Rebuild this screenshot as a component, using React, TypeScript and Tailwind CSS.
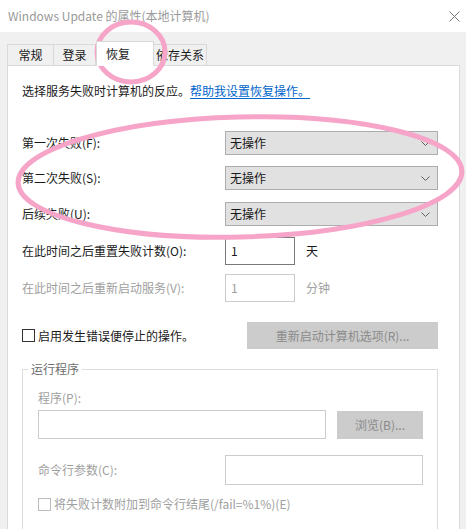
import React from 'react';

const font = { fontFamily: '"Noto Sans CJK SC", "Noto Sans", sans-serif' };

const Chevron = () => (
  <svg width="9" height="5" viewBox="0 0 9 5" className="shrink-0">
    <path d="M0.5 0.5 L4.5 4.5 L8.5 0.5" fill="none" stroke="#606060" strokeWidth="1" />
  </svg>
);

const Dropdown = ({ label }: { label: string }) => (
  <div className="flex items-center h-[24px]">
    <div className="w-[203px] text-[#1a1a1a]">{label}</div>
    <div className="w-[213px] h-[24px] bg-[#e1e1e1] border border-[#adadad] flex items-center justify-between pl-[4px] pr-[7px]">
      <span className="text-[#1a1a1a]">无操作</span>
      <Chevron />
    </div>
  </div>
);

export default function App() {
  const tabs = [
    { name: '常规', w: 'w-[47px]' },
    { name: '登录', w: 'w-[43px]' },
    { name: '恢复', w: 'w-[58px]', active: true },
    { name: '依存关系', w: 'w-[54px]' },
  ];

  return (
    <div className="relative w-[466px] h-[529px] overflow-hidden bg-[#f0f0f0] text-[12px] leading-none" style={font}>
      {/* Title bar */}
      <div className="h-[32px] bg-white flex items-center justify-between pl-[8px] pr-[6px]">
        <span className="text-[12px] text-[#9a9a9a]">Windows Update 的属性(本地计算机)</span>
        <svg width="11" height="11" viewBox="0 0 11 11">
          <path d="M0.5 0.5 L10.5 10.5 M10.5 0.5 L0.5 10.5" stroke="#777" strokeWidth="1" />
        </svg>
      </div>

      {/* Tabs */}
      <div className="h-[33px] flex items-end pl-[7px]">
        {tabs.map((t) =>
          t.active ? (
            <div
              key={t.name}
              className={`${t.w} h-[25px] -mb-px relative z-10 bg-white border border-[#d9d9d9] border-b-0 flex items-center pl-[9px] text-[#1a1a1a]`}
            >
              {t.name}
            </div>
          ) : (
            <div
              key={t.name}
              className={`${t.w} h-[21px] bg-[#f0f0f0] border border-[#d9d9d9] border-b-0 -ml-px first:ml-0 flex items-center justify-center text-[#1a1a1a]`}
            >
              {t.name}
            </div>
          )
        )}
      </div>

      {/* Panel */}
      <div className="ml-[7px] w-[453px] h-[470px] bg-white border border-[#d9d9d9] pl-[14px] flex flex-col">
        <div className="mt-[17px] h-[20px] flex items-center">
          <span className="text-[#1a1a1a]">选择服务失败时计算机的反应。</span>
          <span className="text-[#0066cc] underline underline-offset-2">帮助我设置恢复操作。</span>
        </div>

        <div className="mt-[32px]">
          <Dropdown label="第一次失败(F):" />
        </div>
        <div className="mt-[11px]">
          <Dropdown label="第二次失败(S):" />
        </div>
        <div className="mt-[12px]">
          <Dropdown label="后续失败(U):" />
        </div>

        <div className="mt-[11px] h-[28px] flex items-center">
          <div className="w-[203px] text-[#1a1a1a]">在此时间之后重置失败计数(O):</div>
          <div className="w-[70px] h-[28px] border border-[#7a7a7a] flex items-center pl-[5px] text-[#1a1a1a]">1</div>
          <span className="ml-[11px] text-[#1a1a1a]">天</span>
        </div>
        <div className="mt-[9px] h-[28px] flex items-center">
          <div className="w-[203px] text-[#a0a0a0]">在此时间之后重新启动服务(V):</div>
          <div className="w-[70px] h-[28px] border border-[#cccccc] flex items-center pl-[5px] text-[#a0a0a0]">1</div>
          <span className="ml-[11px] text-[#a0a0a0]">分钟</span>
        </div>

        <div className="mt-[20px] h-[27px] flex items-center">
          <div className="w-[13px] h-[13px] border border-[#333] shrink-0" />
          <span className="ml-[3px] w-[209px] text-[#1a1a1a]">启用发生错误便停止的操作。</span>
          <div className="w-[191px] h-[27px] bg-[#cccccc] flex items-center justify-center text-[#8a8a8a]">
            重新启动计算机选项(R)...
          </div>
        </div>

        {/* Group box */}
        <div className="mt-[20px] relative w-[416px] h-[200px] border border-[#dcdcdc] pl-[15px]">
          <span className="absolute -top-[7px] left-[5px] bg-white px-[3px] text-[#6d6d6d]">运行程序</span>
          <div className="mt-[22px] text-[#a0a0a0]">程序(P):</div>
          <div className="mt-[6px] flex items-center h-[29px]">
            <div className="w-[288px] h-[29px] border border-[#cccccc]" />
            <div className="ml-[11px] w-[86px] h-[28px] bg-[#cccccc] flex items-center justify-center text-[#8a8a8a]">
              浏览(B)...
            </div>
          </div>
          <div className="mt-[16px] h-[30px] flex items-center">
            <div className="w-[187px] text-[#a0a0a0]">命令行参数(C):</div>
            <div className="w-[198px] h-[30px] border border-[#cccccc]" />
          </div>
          <div className="mt-[11px] h-[16px] flex items-center">
            <div className="w-[13px] h-[13px] border border-[#bcbcbc] shrink-0" />
            <span className="ml-[3px] text-[#a0a0a0]">将失败计数附加到命令行结尾(/fail=%1%)(E)</span>
          </div>
        </div>
      </div>

      {/* Pink annotation marks */}
      <svg className="absolute left-0 top-0 pointer-events-none" width="466" height="529" viewBox="0 0 466 529">
        <ellipse cx="131" cy="52" rx="34" ry="30" fill="none" stroke="#f6a5c8" strokeWidth="5" />
        <ellipse
          cx="240"
          cy="177"
          rx="222"
          ry="60"
          transform="rotate(-1.5 240 177)"
          fill="none"
          stroke="#f6a5c8"
          strokeWidth="5"
        />
      </svg>
    </div>
  );
}
